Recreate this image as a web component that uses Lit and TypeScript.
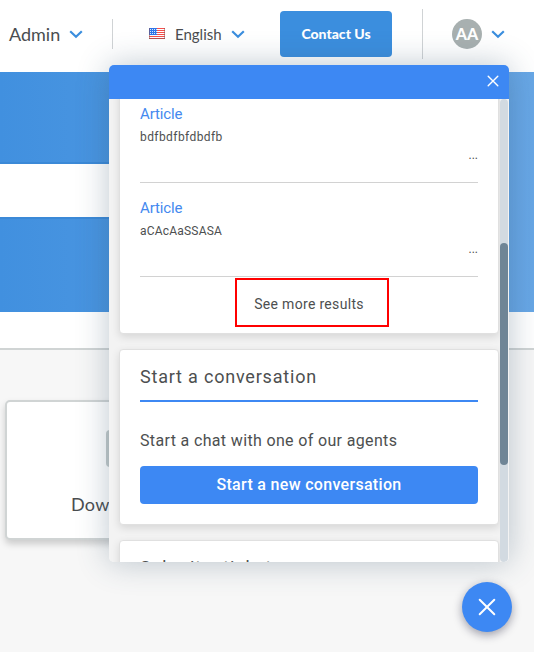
import { LitElement, html, css, svg } from "lit";
import { customElement } from "lit/decorators.js";

const stars = [1, 3, 5, 7].flatMap((x) => [1, 3, 5].map((y) => ({ x, y })));

@customElement("chevron-icon")
class ChevronIcon extends LitElement {
  static styles = css`
    :host { display: block; width: 14px; height: 9px; }
    svg { display: block; }
    path { fill: none; stroke: #3b8ede; stroke-width: 2.2; }
  `;
  render() {
    return html`<svg width="14" height="9" viewBox="0 0 14 9"><path d="M1.2 1.2 L7 6.7 L12.8 1.2" /></svg>`;
  }
}

@customElement("article-item")
class ArticleItem extends LitElement {
  static styles = css`
    :host { display: flex; flex-direction: column; box-sizing: border-box; height: 94px; border-bottom: 1px solid #d2d2d2; color: #4d4f50; }
    .title { margin-top: 16px; font-size: 15px; line-height: 18px; letter-spacing: -0.14px; color: #4489ef; }
    .text { margin-top: 7px; font-size: 12px; line-height: 15px; letter-spacing: 0.2px; white-space: nowrap; }
    :host(.wide) .text { letter-spacing: 0.42px; }
    .more { align-self: flex-end; margin-top: 3px; font-size: 12px; line-height: 15px; }
  `;
  render() {
    return html`<div class="title">Article</div><div class="text"><slot></slot></div><div class="more">...</div>`;
  }
}

@customElement("app-root")
class AppRoot extends LitElement {
  static styles = css`
    :host { display: block; position: relative; width: 534px; height: 652px; overflow: hidden; background: #f7f7f7; font-family: Lato, sans-serif; color: #4a4d50; }
    * { box-sizing: border-box; }
    .top { display: flex; height: 72px; background: #fff; }
    .admin { margin: 22px 0 0 9px; width: 60px; font-size: 18px; line-height: 24px; white-space: nowrap; }
    .admin-arrow { margin-top: 30px; }
    .rule { width: 1px; height: 30px; margin: 19px 0 0 29px; background: #d0d3d5; }
    .flag { display: block; margin: 28px 0 0 36px; }
    .language { margin: 24px 0 0 10px; width: 56px; font-size: 15px; line-height: 20px; white-space: nowrap; }
    .language-arrow { margin-top: 30px; }
    .contact { width: 112px; height: 46px; margin: 11px 0 0 35px; border-radius: 4px; background: #3b8ede; color: #fff; font-size: 14px; font-weight: 900; line-height: 46px; text-align: center; }
    .rule.tall { height: 50px; margin: 9px 0 0 30px; }
    .avatar { width: 30px; height: 30px; margin: 19px 0 0 29px; border-radius: 50%; background: #a8b0b0; color: #fff; font-size: 16px; font-weight: 900; line-height: 30px; text-align: center; }
    .user-arrow { margin: 30px 0 0 9px; }
    .hero { height: 240px; padding-top: 90px; background: linear-gradient(90deg, #4190df, #68a7e6); }
    .search { width: 450px; height: 57px; border: solid #3b89d7; border-width: 2px 0; background: #fff; }
    .strip { height: 38px; background: #fff; border-bottom: 2px solid #d0d4d4; }
    .download { display: flex; flex-direction: column; width: 230px; height: 140px; margin: 50px 0 0 5px; padding: 28px 0 0 64px; background: #fff; border: 2px solid #d0d4d4; border-radius: 5px; box-shadow: 0 4px 7px rgba(0,0,0,.18); }
    .tile { width: 90px; height: 37px; margin-left: 35px; border-radius: 4px; background: #c3caca; }
    .download-label { margin-top: 25px; font-size: 18px; line-height: 24px; letter-spacing: .25px; }
    .panel { position: absolute; left: 109px; top: 65px; width: 400px; height: 497px; display: flex; flex-direction: column; border-radius: 5px; overflow: hidden; background: #f3f3f3; font-family: Roboto, sans-serif; color: #4d4f50; }
    .shade { position: absolute; left: 109px; top: 65px; width: 400px; height: 497px; border-radius: 5px; box-shadow: 0 0 32px rgba(50,80,105,.32); }
    .panel-head { flex: none; height: 34px; display: flex; justify-content: flex-end; padding: 10px 10px 0 0; background: #3d88f3; }
    .panel-body { flex: 1; min-height: 0; display: flex; overflow: hidden; }
    .cards { width: 391px; padding-left: 10px; overflow: hidden; }
    .card { width: 380px; padding: 0 20px; background: #fff; border: 1px solid #e0e0e0; border-radius: 4px; box-shadow: 0 3px 9px rgba(0,0,0,.12); }
    .results { height: 246px; margin-top: -11px; }
    .see-more { width: 154px; height: 49px; margin: 1px 0 0 95px; padding-right: 6px; border: 2px solid #ff0000; font-size: 14px; line-height: 48px; letter-spacing: .32px; text-align: center; white-space: nowrap; }
    .chat { height: 176px; margin-top: 15px; }
    .card-title { height: 52px; padding-top: 15px; border-bottom: 2px solid #3d88f3; font-size: 18px; line-height: 23px; letter-spacing: .8px; white-space: nowrap; }
    .prompt { margin-top: 29px; font-size: 16px; line-height: 20px; letter-spacing: .35px; white-space: nowrap; }
    .start { height: 38px; margin-top: 15px; border-radius: 4px; background: #3d88f3; color: #fff; font-size: 16px; font-weight: 500; line-height: 37px; letter-spacing: .31px; text-align: center; }
    .ticket { height: 176px; margin-top: 15px; }
    .ticket .card-title { letter-spacing: .85px; }
    .scroll { width: 8px; padding-top: 144px; border-radius: 4px; background: #d2dae1; }
    .thumb { height: 222px; border-radius: 4px; background: #6f8596; }
    .close { position: absolute; left: 462px; top: 582px; width: 50px; height: 50px; display: grid; place-items: center; border-radius: 50%; background: #3d88f3; box-shadow: 0 3px 10px rgba(20,20,50,.4); }
    .cross { display: block; fill: none; stroke: #fff; stroke-linecap: round; }
  `;
  render() {
    return html`
      <div class="top">
        <div class="admin">Admin</div>
        <chevron-icon class="admin-arrow"></chevron-icon>
        <div class="rule"></div>
        <svg class="flag" width="16" height="11" viewBox="0 0 16 11">
          <rect width="16" height="11" fill="#fff" />
          <path d="M0 .5H16M0 2.5H16M0 4.5H16M0 6.5H16M0 8.5H16M0 10.5H16" stroke="#f5504c" />
          <rect width="8" height="7" fill="#2f76e8" />
          ${stars.map((s) => svg`<rect x=${s.x} y=${s.y} width="1" height="1" fill="#d5e5ff" />`)}
          <path d="M.5 0V11M0 10.5H16M15.5 0V11" fill="none" stroke="#884c50" stroke-opacity=".5" />
        </svg>
        <div class="language">English</div>
        <chevron-icon class="language-arrow"></chevron-icon>
        <div class="contact">Contact Us</div>
        <div class="rule tall"></div>
        <div class="avatar">AA</div>
        <chevron-icon class="user-arrow"></chevron-icon>
      </div>
      <div class="hero"><div class="search"></div></div>
      <div class="strip"></div>
      <div class="download"><div class="tile"></div><div class="download-label">Download</div></div>
      <div class="shade"></div>
      <div class="panel">
        <div class="panel-head">
          <svg class="cross" width="12" height="12" viewBox="0 0 12 12"><path d="M1.2 1.2L10.8 10.8M10.8 1.2L1.2 10.8" stroke-width="1.4" /></svg>
        </div>
        <div class="panel-body">
          <div class="cards">
            <div class="card results">
              <article-item class="wide">bdfbdfbfdbdfb</article-item>
              <article-item>aCAcAaSSASA</article-item>
              <div class="see-more">See more results</div>
            </div>
            <div class="card chat">
              <div class="card-title">Start a conversation</div>
              <div class="prompt">Start a chat with one of our agents</div>
              <div class="start">Start a new conversation</div>
            </div>
            <div class="card ticket"><div class="card-title">Submit a ticket</div></div>
          </div>
          <div class="scroll"><div class="thumb"></div></div>
        </div>
      </div>
      <div class="close">
        <svg class="cross" width="18" height="18" viewBox="0 0 18 18"><path d="M1.7 1.7L16.3 16.3M16.3 1.7L1.7 16.3" stroke-width="2" /></svg>
      </div>
    `;
  }
}
